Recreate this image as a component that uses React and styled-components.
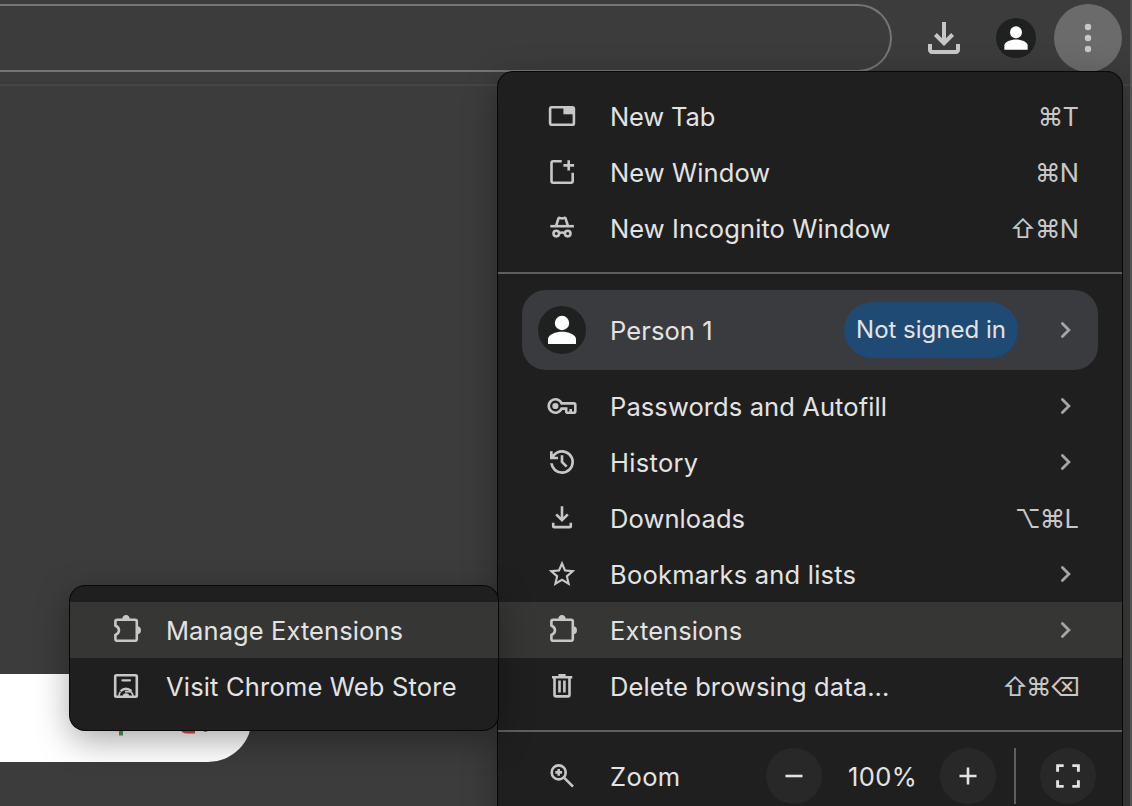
import React from "react";
import styled, { createGlobalStyle, css } from "styled-components";
import { MdStarBorder } from "react-icons/md";

const GlobalStyle = createGlobalStyle`
  * { box-sizing: border-box; }
  body { margin: 0; background: #3c3c3c; overflow: hidden; }
`;

const Screen = styled.div`
  position: relative;
  width: 1132px;
  height: 806px;
  overflow: hidden;
  background: #3c3c3c;
  border-right: 2px solid #555553;
  font-family: Inter, "Liberation Sans", sans-serif;
  font-size: 25.5px;
  font-weight: 430;
  color: #e3e3e3;
`;

const Toolbar = styled.header`
  display: flex;
  align-items: flex-start;
  height: 86px;
  padding: 4px 8px 0 0;
  border-bottom: 2px solid #454545;
`;

const AddressBar = styled.div`
  width: 892px;
  height: 68px;
  flex: none;
  border: 2px solid #757575;
  border-left: 0;
  border-radius: 0 34px 34px 0;
`;

const ToolbarActions = styled.div`
  display: flex;
  align-items: center;
  height: 68px;
  padding-left: 28px;
`;

const Avatar = styled.span`
  display: flex;
  flex: none;
  width: ${(p) => p.$size}px;
  height: ${(p) => p.$size}px;
  border-radius: 50%;
  background: #1f2120;
`;

const ToolbarAvatar = styled(Avatar)`
  margin-left: 28px;
`;

const MoreButton = styled.button`
  display: flex;
  align-items: center;
  justify-content: center;
  width: 68px;
  height: 68px;
  margin-left: 18px;
  padding: 0;
  border: 0;
  border-radius: 50%;
  background: #6b6b6b;
`;

const Page = styled.main`
  padding-top: 588px;
`;

const SearchBox = styled.div`
  display: flex;
  align-items: flex-end;
  width: 252px;
  height: 88px;
  border-radius: 0 44px 44px 0;
  background: #fff;
`;

const surface = css`
  background: #1f1f1f;
  box-shadow: 0 0 0 1px #080808, 0 10px 34px rgba(0, 0, 0, 0.35);
`;

const Menu = styled.nav`
  position: absolute;
  top: 72px;
  left: 498px;
  width: 624px;
  height: 760px;
  padding-top: 16px;
  border-radius: 15px;
  ${surface}
`;

const Submenu = styled.nav`
  position: absolute;
  top: 586px;
  left: 70px;
  width: 428px;
  padding: 16px 0;
  border-radius: 15px;
  ${surface}
`;

const Item = styled.div`
  display: flex;
  align-items: center;
  height: 56px;
  padding: 0 44px 0 ${(p) => (p.$sub ? 40 : 48)}px;
  background: ${(p) => (p.$active ? "#363634" : "transparent")};
`;

const Label = styled.span`
  flex: 1;
  margin-left: ${(p) => (p.$sub ? 24 : 32)}px;
  padding-top: 2px;
  line-height: 32px;
  white-space: nowrap;
  letter-spacing: ${(p) => p.$track ?? 0.1}px;
`;

const Shortcut = styled.span`
  padding-top: 2px;
  line-height: 32px;
  white-space: nowrap;
  letter-spacing: ${(p) => p.$track ?? -0.9}px;
  color: #c7c7c7;
`;

const Divider = styled.div`
  height: 2px;
  margin: 16px 0;
  background: #5f5f5f;
`;

const Profile = styled.div`
  display: flex;
  align-items: center;
  height: 80px;
  margin: 0 24px 8px;
  padding: 0 20px 0 16px;
  border-radius: 24px;
  background: #3a3b3e;
`;

const ProfileName = styled(Label)`
  margin-left: 24px;
`;

const StatusPill = styled.span`
  width: 174px;
  height: 56px;
  margin-right: 38px;
  border-radius: 28px;
  background: #1f4a74;
  font-size: 24px;
  line-height: 56px;
  text-align: center;
  white-space: nowrap;
`;

const ZoomRow = styled.div`
  display: flex;
  align-items: center;
  height: 56px;
  padding: 0 26px 0 48px;
`;

const RoundButton = styled.button`
  display: flex;
  align-items: center;
  justify-content: center;
  width: 56px;
  height: 56px;
  padding: 0;
  border: 0;
  border-radius: 50%;
  background: #282828;
`;

const ZoomValue = styled.span`
  width: 118px;
  padding: 2px 0 0 3px;
  text-align: center;
  line-height: 32px;
  letter-spacing: 0.4px;
`;

const VerticalRule = styled.div`
  width: 2px;
  height: 56px;
  margin: 0 24px 0 18px;
  background: #5f5f5f;
`;

const Svg = styled.svg`
  display: block;
  flex: none;
  fill: none;
  stroke: #c7c7c7;
  stroke-width: 2.6;
`;

const StarIcon = styled(MdStarBorder)`
  flex: none;
  color: #c7c7c7;
`;

const ChevronSvg = styled(Svg)`
  margin-right: 4px;
  stroke: #a5a5a5;
  stroke-width: 2.8;
`;

const Icon = ({ children, size = 32, box = 32 }) => (
  <Svg width={size} height={size} viewBox={`0 0 ${box} ${box}`}>{children}</Svg>
);

const Chevron = () => (
  <ChevronSvg width="18" height="20" viewBox="0 0 18 20" strokeLinecap="round">
    <path d="m6.4 3.5 6.5 6.5-6.5 6.5" />
  </ChevronSvg>
);

const PersonIcon = ({ size }) => (
  <Svg width={size} height={size} viewBox="0 0 48 48">
    <g fill="#fff" stroke="none">
      <circle cx="24" cy="17" r="7.2" />
      <path d="M10 38v-5c0-4.6 8-7.3 14-7.3s14 2.7 14 7.3v5z" />
    </g>
  </Svg>
);

const TabIcon = () => (
  <Icon>
    <rect x="4.1" y="7.2" width="23.8" height="17.6" rx="1.6" />
    <path d="M17.4 7h10.4v7.3H17.4z" fill="#c7c7c7" stroke="none" />
  </Icon>
);
const WindowIcon = () => (
  <Icon>
    <path d="M15.7 5.3H7.1a1.6 1.6 0 0 0-1.6 1.6v18.2a1.6 1.6 0 0 0 1.6 1.6h18a1.6 1.6 0 0 0 1.6-1.6v-8.4M22.7 4.2v10.4M17.4 9.4h10.7" />
  </Icon>
);
const IncognitoIcon = () => (
  <Icon>
    <path d="M4.3 14.2h23.6" />
    <path d="m10.1 14 2.2-7.2q.4-1.2 1.6-.8l2.1.5 2.1-.5q1.2-.4 1.6.8l2.2 7.2" />
    <circle cx="10.3" cy="21.6" r="2.8" />
    <circle cx="21.7" cy="21.6" r="2.8" />
    <path d="M13 21.2q3-1.4 6 0" />
  </Icon>
);
const KeyIcon = () => (
  <Icon>
    <circle cx="9.4" cy="16" r="3.1" fill="#c7c7c7" stroke="none" />
    <path d="M15.6 13.4a6.7 6.7 0 1 0 0 5.2h4.6v2.7q0 1.5 1.5 1.5h6.1q1.5 0 1.5-1.5v-6.4q0-1.5-1.5-1.5zM24.7 22.5V19" />
  </Icon>
);
const HistoryIcon = () => (
  <Svg width="32" height="32" viewBox="0 -960 960 960">
    <path
      fill="#c7c7c7"
      stroke="none"
      d="M480-120q-138 0-240.5-91.5T122-440h82q14 104 92.5 172T480-200q117 0 198.5-81.5T760-480q0-117-81.5-198.5T480-760q-69 0-129 32t-101 88h110v80H120v-240h80v94q51-64 124.5-99T480-840q75 0 140.5 28.5t114 77q48.5 48.5 77 114T840-480q0 75-28.5 140.5t-77 114q-48.5 48.5-114 77T480-120Zm112-192L440-464v-216h80v184l128 128-56 56Z"
    />
  </Svg>
);
const DownloadIcon = () => (
  <Icon>
    <path d="M16 4.2v14M10.2 12.3l5.8 5.8 5.8-5.8M7.2 20.7v3.2q0 1.2 1.2 1.2h15.2q1.2 0 1.2-1.2v-3.2" />
  </Icon>
);
const ToolbarDownloadIcon = () => (
  <Svg width="48" height="48" viewBox="0 -960 960 960">
    <path
      fill="#c7c7c7"
      stroke="none"
      d="M480-320 280-520l56-58 104 104v-326h80v326l104-104 56 58-200 200ZM240-160q-33 0-56.5-23.5T160-240v-120h80v120h480v-120h80v120q0 33-23.5 56.5T720-160H240Z"
    />
  </Svg>
);
const PuzzleIcon = () => (
  <Icon>
    <path d="M7 5.8h18.2a1.6 1.6 0 0 1 1.6 1.6v17.8a1.6 1.6 0 0 1-1.6 1.6H7a1.6 1.6 0 0 1-1.6-1.6v-4.2q3.6-1.7 3.6-4.7t-3.6-4.8V7.4A1.6 1.6 0 0 1 7 5.8z" />
    <path d="M12.3 5.6a3.7 4.5 0 0 1 7.4 0zM27 12.3a4 4 0 0 1 0 8z" fill="#c7c7c7" stroke="none" />
  </Icon>
);
const TrashIcon = () => (
  <Icon>
    <path d="M6 7.2h20.3M12.4 5.2h7.2M8.5 8v16.8q0 1.6 1.6 1.6h11.8q1.6 0 1.6-1.6V8M13.5 10.6v12M18.4 10.6v12" />
  </Icon>
);
const ZoomIcon = () => (
  <Icon>
    <circle cx="12.7" cy="12.4" r="7" />
    <path d="m18 17.6 9 9M12.7 9v6.8M9.3 12.4h6.8" />
  </Icon>
);
const StoreIcon = () => (
  <Icon>
    <rect x="5.2" y="5.2" width="21.6" height="21.6" rx="1.2" />
    <path d="M12.4 10.3h7.6" strokeWidth="2.2" strokeLinecap="round" />
    <path d="M10.6 21.2q5.2-4.8 10.9-.2" strokeWidth="2.4" />
    <path d="M8.9 26q0-2.6 1.6-4.2M15 21.6h5.6q2.2 1.6 2.5 4.4" strokeWidth="1.7" />
    <path d="M12.8 26.4a3.2 3.2 0 0 1 6.4 0z" fill="#c7c7c7" stroke="none" />
  </Icon>
);

const topItems = [
  { icon: <TabIcon />, label: "New Tab", keys: "⌘T", track: -0.15 },
  { icon: <WindowIcon />, label: "New Window", keys: "⌘N" },
  { icon: <IncognitoIcon />, label: "New Incognito Window", keys: "⇧⌘N" },
];

const libraryItems = [
  { icon: <KeyIcon />, label: "Passwords and Autofill" },
  { icon: <HistoryIcon />, label: "History", track: 0.3 },
  { icon: <DownloadIcon />, label: "Downloads", keys: "⌥⌘L" },
  { icon: <StarIcon size={32} />, label: "Bookmarks and lists", track: 0.22 },
  { icon: <PuzzleIcon />, label: "Extensions", active: true },
  { icon: <TrashIcon />, label: "Delete browsing data...", keys: "⇧⌘⌫", keyTrack: -2.3 },
];

const extensionItems = [
  { icon: <PuzzleIcon />, label: "Manage Extensions", active: true, track: 0.08 },
  { icon: <StoreIcon />, label: "Visit Chrome Web Store", track: 0.18 },
];

const MenuItem = ({ icon, label, keys, active, track, keyTrack }) => (
  <Item $active={active}>
    {icon}
    <Label $track={track}>{label}</Label>
    {keys ? <Shortcut $track={keyTrack}>{keys}</Shortcut> : <Chevron />}
  </Item>
);

export default function App() {
  return (
    <Screen>
      <GlobalStyle />
      <Toolbar>
        <AddressBar />
        <ToolbarActions>
          <ToolbarDownloadIcon />
          <ToolbarAvatar $size={40}><PersonIcon size={40} /></ToolbarAvatar>
          <MoreButton aria-label="More">
            <Svg width="8" height="32" viewBox="0 0 8 32">
              <g fill="#c7c7c7" stroke="none">
                <circle cx="4" cy="5" r="3.2" />
                <circle cx="4" cy="16" r="3.2" />
                <circle cx="4" cy="27" r="3.2" />
              </g>
            </Svg>
          </MoreButton>
        </ToolbarActions>
      </Toolbar>
      <Page>
        <SearchBox>
          <Svg width="252" height="40" viewBox="0 0 252 40">
            <g stroke="none">
              <path d="M119 0h4v13.5h-4z" fill="#4f9d58" />
              <path d="M180 7h15v4.5h-8q-5 0-7-4.5z" fill="#d64b3b" />
              <circle cx="205.5" cy="6.8" r="3" fill="#286b35" />
            </g>
          </Svg>
        </SearchBox>
      </Page>
      <Menu>
        {topItems.map((item) => <MenuItem key={item.label} {...item} />)}
        <Divider />
        <Profile>
          <Avatar $size={48}><PersonIcon size={48} /></Avatar>
          <ProfileName>Person 1</ProfileName>
          <StatusPill>Not signed in</StatusPill>
          <Chevron />
        </Profile>
        {libraryItems.map((item) => <MenuItem key={item.label} {...item} />)}
        <Divider />
        <ZoomRow>
          <ZoomIcon />
          <Label $track={0.4}>Zoom</Label>
          <RoundButton aria-label="Zoom out"><Icon><path d="M7.5 16h17" stroke="#e3e3e3" /></Icon></RoundButton>
          <ZoomValue>100%</ZoomValue>
          <RoundButton aria-label="Zoom in"><Icon><path d="M7.5 16h17M16 7.5v17" stroke="#e3e3e3" /></Icon></RoundButton>
          <VerticalRule />
          <RoundButton aria-label="Full screen">
            <Icon><path d="M11.7 5.6H5.6v6.1M20.3 5.6h6.1v6.1M5.6 20.3v6.1h6.1M26.4 20.3v6.1h-6.1" stroke="#e3e3e3" strokeWidth="2.9" /></Icon>
          </RoundButton>
        </ZoomRow>
      </Menu>
      <Submenu>
        {extensionItems.map((item) => (
          <Item key={item.label} $sub $active={item.active}>
            {item.icon}
            <Label $sub $track={item.track}>{item.label}</Label>
          </Item>
        ))}
      </Submenu>
    </Screen>
  );
}
